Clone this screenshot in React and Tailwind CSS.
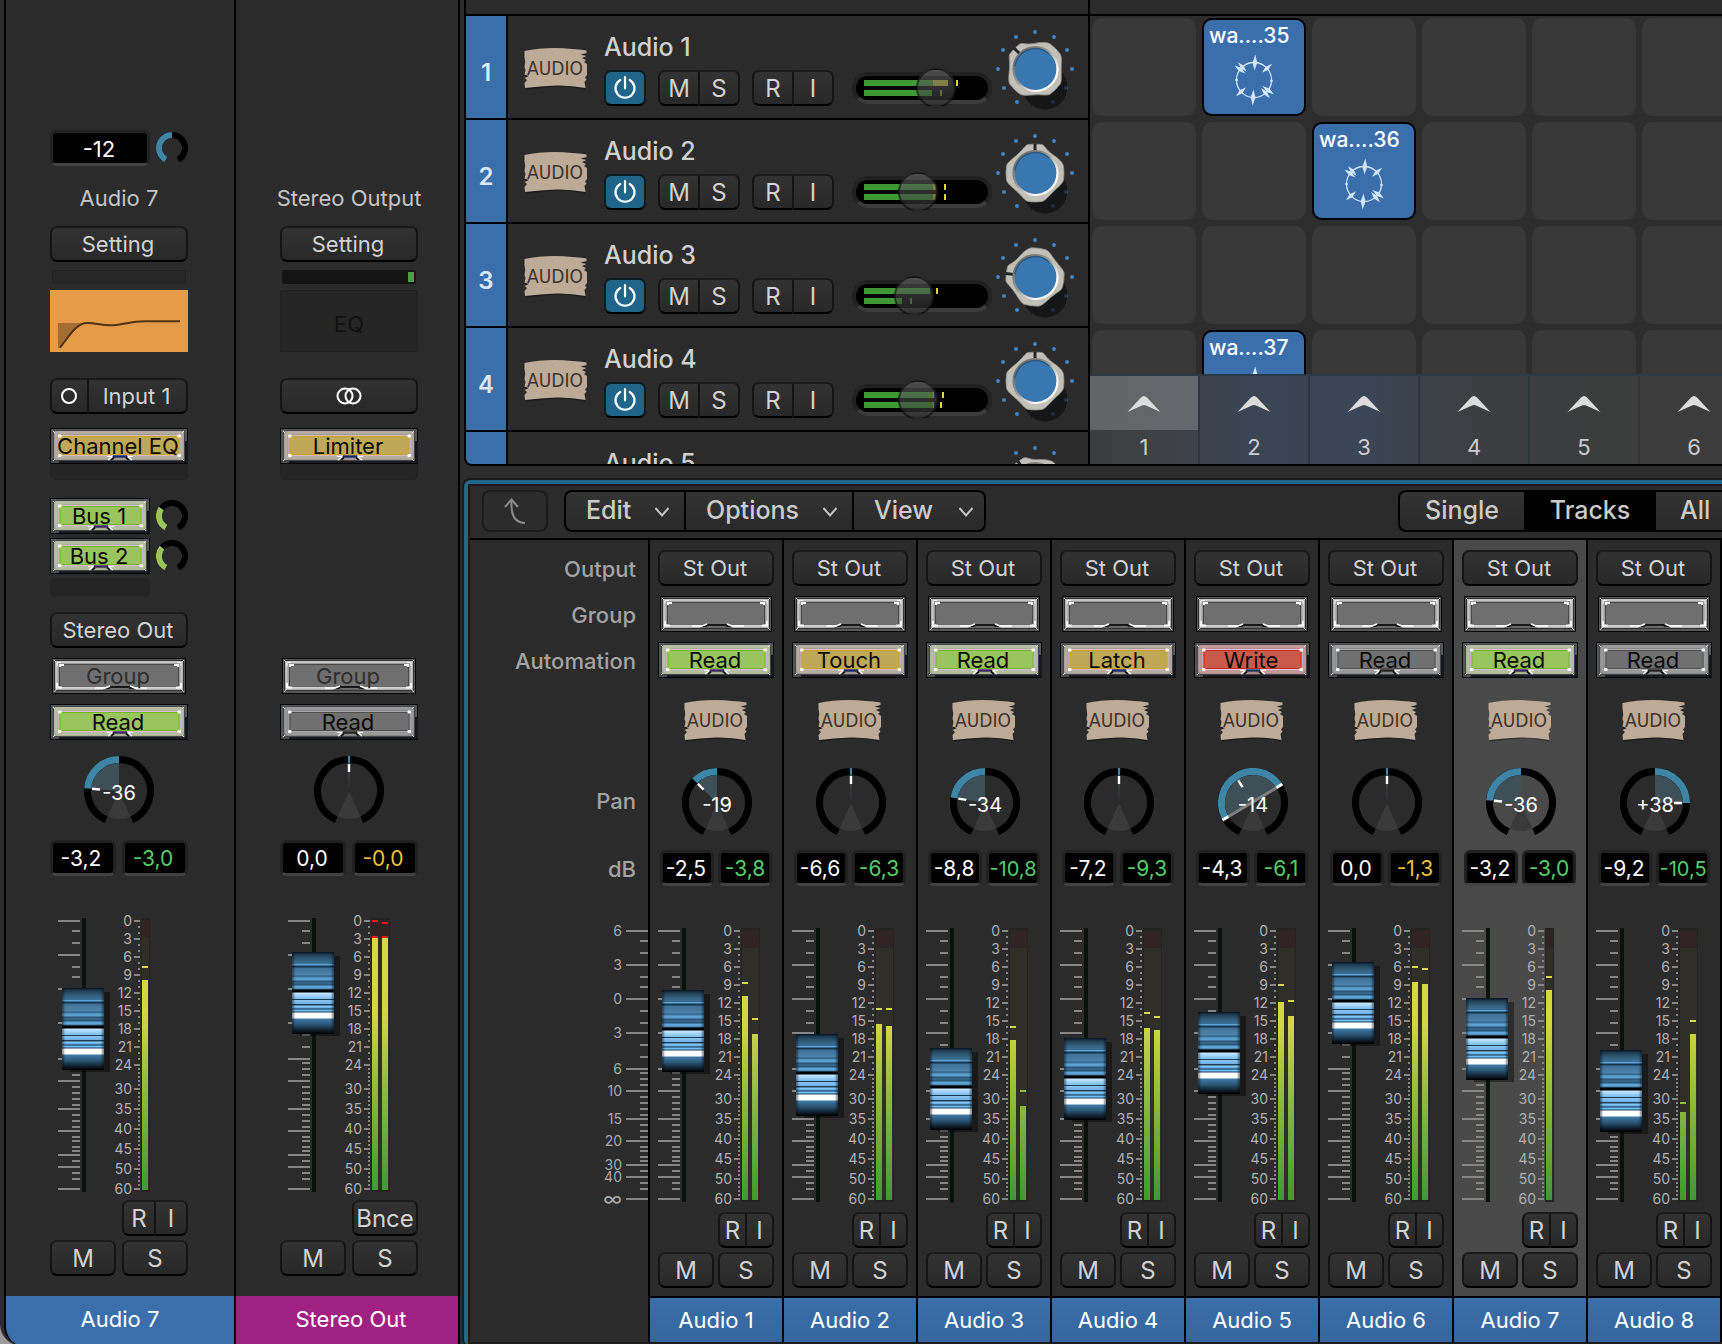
import React from "react";

/* ---------- shared styles ---------- */
const BTN =
  "box-border flex h-9 items-center justify-center overflow-visible whitespace-nowrap rounded-[7px] border-2 border-t-[#1a1a1a] border-x-[#131313] border-b-black bg-linear-to-b from-[#323232] to-[#282828] text-[#d2d2d2]";
const LABEL = "pr-[2px] text-[22px]";
const LETTER = "pt-[2px] text-[24px]";

const CAP =
  "[&::-webkit-slider-thumb]:appearance-none [&::-webkit-slider-thumb]:h-[82px] [&::-webkit-slider-thumb]:w-[42px] [&::-webkit-slider-thumb]:rounded-[1px] [&::-webkit-slider-thumb]:border-0 [&::-webkit-slider-thumb]:shadow-[7px_3px_0_-1px_rgba(0,0,0,0.4),inset_2px_0_2px_rgba(0,10,20,0.45),inset_-2px_0_2px_rgba(0,10,20,0.45)] [&::-webkit-slider-thumb]:bg-[linear-gradient(180deg,#0c1a26_0px,#1f4058_3px,#35607f_8px,#3d7098_12px,#5da4da_12px,#5da4da_13px,#16344a_14px,#16344a_15px,#3f6f94_16px,#4d84ad_23px,#2d5a7c_24px,#5da0d0_26px,#5da0d0_28px,#27506e_29px,#3a6b90_31px,#27506e_33px,#5fa5d8_34px,#5fa5d8_36px,#3a6d93_37px,#000_38px,#000_40px,#c8e8ff_41px,#9dd2fa_44px,#79b9ea_47px,#1d3c54_47px,#1d3c54_48px,#8cc4f2_48px,#6fb0e6_52px,#1d3c54_52px,#1d3c54_53px,#8fd0ff_54px,#5da8e0_56px,#163048_57px,#6fc0f5_58px,#6fc0f5_59px,#1d3c54_60px,#fff_61px,#fff_66px,#3e78a3_67px,#2d5a7c_72px,#12222f_78px,#000_82px)]";

const KNOB_THUMB =
  "[&::-webkit-slider-thumb]:appearance-none [&::-webkit-slider-thumb]:size-10 [&::-webkit-slider-thumb]:rounded-full [&::-webkit-slider-thumb]:border-2 [&::-webkit-slider-thumb]:border-black/50 [&::-webkit-slider-thumb]:bg-linear-to-b [&::-webkit-slider-thumb]:from-[#6a6a6a]/60 [&::-webkit-slider-thumb]:to-[#2e2e2e]/60";

/* ---------- backlit display button ---------- */
const TONES = {
  green: { bezel: "#a9b191", edge: "#6fbb1c", fill: "#9ac45e", rim: "#e2b4e6", under: "#3a2360" },
  yellow: { bezel: "#a59c8f", edge: "#c9a71c", fill: "#bfa958", rim: "#d9b7c9", under: "#16296b" },
  red: { bezel: "#b58686", edge: "#c92a16", fill: "#c95a4b", rim: "#d9c6f2", under: "#123c62" },
  gray: { bezel: "#868686", edge: "#4e4e4e", fill: "#707070", rim: "#a9a9a9", under: "#222222" },
};

function DisplayFace({ w, tone, wide }) {
  const c = TONES[tone];
  const m = w / 2;
  if (wide) {
    return (
      <svg className="absolute inset-0" width={w} height="36" viewBox={`0 0 ${w} 36`} aria-hidden="true">
        <rect width={w} height="36" rx="1" fill="#060606" />
        <rect x="1" y="1" width={w - 2} height="34" fill="#585858" />
        <rect x="2.5" y="2.5" width={w - 5} height="30" rx="1" fill="#9a9a9a" stroke="#333" />
        <rect x="4.5" y="4" width={w - 9} height="26.5" rx="1" fill="none" stroke="#c6c6c6" strokeWidth="2" />
        <rect x="7.5" y="6.5" width={w - 15} height="22" rx="1.500" fill="#6f6f6f" stroke="#474747" />
        <path d={`M8 9V7H12M${w - 8} 9V7H${w - 12}M5 25V29.500H10M${w - 5} 25V29.500H${w - 10}`} fill="none" stroke="#fff" strokeWidth="1.800" />
        <path d={`M5 8V4.500H9M${w - 5} 8V4.500H${w - 9}`} fill="none" stroke="#f2f2f2" strokeWidth="1" />
        <path d={`M2 2l2 2M${w - 2} 2l-2 2M2 34l3-3M${w - 2} 34l-3-3`} stroke="#e8e8e8" strokeWidth="0.8" />
        <path d={`M10 29.500H${w - 10}`} stroke="#d2d2d2" strokeWidth="1.500" />
        <path d={`M${m - 16} 31.500L${m - 9} 28H${m + 11}L${m + 17} 31.500Z`} fill="#171717" />
        <path d={`M${m - 11} 31.500H${m + 12}L${m + 9} 30H${m - 8}Z`} fill="#6f6f6f" />
        <path d={`M${m - 24} 30H${m - 14}L${m - 9} 28M${m + 28} 30H${m + 16}L${m + 11} 28`} fill="none" stroke="#fff" strokeWidth="1.500" />
      </svg>
    );
  }
  return (
    <svg className="absolute inset-0" width={w} height="36" viewBox={`0 0 ${w} 36`} aria-hidden="true">
      <rect width={w} height="36" rx="1" fill="#060606" />
      <rect x="1" y="1" width={w - 2} height="32" fill="#55565a" />
      <rect x="1" y="32" width="8" height="3" fill="#4c4c4c" />
      <rect x={w - 3} y="13" width="3" height="22" fill="#15161a" />
      <rect x="9" y="33" width={w - 12} height="2" fill="#1a1a22" />
      <rect x="3.5" y="2.5" width={w - 7} height="30" rx="2" fill={c.bezel} stroke="#44454a" />
      <rect x="6" y="4.5" width={w - 12} height="25" rx="3" fill="none" stroke="#fff" strokeOpacity="0.16" strokeWidth="3" />
      <rect x="9" y="7.5" width={w - 17} height="20" rx="1" fill={c.fill} stroke={c.rim} />
      <rect x="10" y="8.5" width={w - 19} height="18" rx="1" fill="none" stroke={c.edge} />
      <g fill="#fff">
        <rect x="8" y="6.5" width="3.5" height="3" rx="1" />
        <rect x={w - 10.5} y="6.5" width="3.5" height="3" rx="1" />
        <rect x="8" y="26" width="3.5" height="3" rx="1" />
        <rect x={w - 10.5} y="26" width="3.5" height="3" rx="1" />
      </g>
      <path d={`M3 3l2 2M${w - 4} 3l-2 2M3 33l2-2M${w - 4} 33l-2-2`} stroke="#f4f4f4" strokeWidth="1" />
      <path d={`M${m - 5} 28H${m + 7}L${m + 11} 32H${m - 9}Z`} fill={c.bezel} />
      <path d={`M${m - 6} 28.500H${m + 8}`} stroke={c.under} strokeWidth="2.400" />
      <path d={`M${m - 5} 29.500L${m - 8} 32M${m + 7} 29.500L${m + 10} 32`} stroke="#111" strokeWidth="1.800" />
      <path d={`M${m - 12} 28.500H${m - 7}M${m - 7} 29L${m - 11} 32M${m + 14} 28.500H${m + 9}M${m + 9} 29L${m + 13} 32`} fill="none" stroke="#fff" strokeWidth="1.200" />
    </svg>
  );
}

function Display({ w, width, tone = "gray", wide = false, dim = false, label, children }) {
  return (
    <button type="button" aria-label={label} className={`relative block h-9 ${width}`}>
      <DisplayFace w={w} tone={tone} wide={wide} />
      <span className={`relative block pr-[2px] text-center text-[22px] leading-9 whitespace-nowrap ${dim ? "text-[#2e2e2e]" : "text-[#0c0c0c]"}`}>
        {children}
      </span>
    </button>
  );
}

/* ---------- readouts ---------- */
function Readout({ children, className = "", label }) {
  return (
    <output
      aria-label={label}
      className={`flex h-9 items-center justify-center whitespace-nowrap rounded-[6px] border-3 border-[#212121] border-b-[#424242] bg-black pt-[2px] ${className}`}
    >
      {children}
    </output>
  );
}

/* ---------- pan and send knobs ---------- */
const pt = (cx, cy, r, a) => {
  const t = (a * Math.PI) / 180;
  return `${(cx + r * Math.sin(t)).toFixed(2)} ${(cy - r * Math.cos(t)).toFixed(2)}`;
};
const arc = (c, r, a, b) => `M${pt(c, c, r, a)}A${r} ${r} 0 ${b - a > 180 ? 1 : 0} 1 ${pt(c, c, r, b)}`;
const pie = (c, r, a, b) => `M${c} ${c}L${pt(c, c, r, a)}A${r} ${r} 0 ${b - a > 180 ? 1 : 0} 1 ${pt(c, c, r, b)}Z`;

function PanKnob({ value, spread }) {
  const a = value * 2.37;
  const from = spread ? spread[0] : value === 0 ? -2 : Math.min(0, a);
  const to = spread ? spread[1] : value === 0 ? 2 : Math.max(0, a);
  return (
    <div className="relative size-[70px]" role="slider" tabIndex={0} aria-label="Pan" aria-valuemin={-64} aria-valuemax={63} aria-valuenow={value}>
      <svg width="70" height="70" viewBox="0 0 70 70" aria-hidden="true">
        <path d={pie(35, 28, 156, 204)} fill="#3a3a3a" />
        <path d={pie(35, 28, from, to)} fill="#3e4f58" />
        <path d={arc(35, 31.5, -156, 156)} fill="none" stroke="#000" strokeWidth="7" />
        <path d={arc(35, 31.5, from, to)} fill="none" stroke="#3f85a6" strokeWidth="7" />
        {spread && (
          <>
            <path d={`M${pt(35, 35, 28, spread[0])}L${pt(35, 35, 28, spread[1])}`} stroke="#808080" strokeWidth="3" />
            <path d={`M${pt(35, 35, 28, spread[0])}L${pt(35, 35, 35, spread[0])}M${pt(35, 35, 28, spread[1])}L${pt(35, 35, 35, spread[1])}`} stroke="#fff" strokeWidth="3" />
          </>
        )}
        <path d={`M${pt(35, 35, 19, a)}L${pt(35, 35, 27, a)}`} stroke="#fff" strokeWidth="2.4" />
      </svg>
      {value !== 0 && (
        <span className="absolute inset-0 text-center text-[20px] leading-[74px] text-white">
          {value > 0 ? `+${value}` : value}
        </span>
      )}
    </div>
  );
}

function SmallKnob({ to, color, label }) {
  return (
    <svg width="32" height="32" viewBox="0 0 32 32" role="img" aria-label={label}>
      <path d={arc(16, 13, -152, 152)} fill="none" stroke="#000" strokeWidth="6" />
      <path d={arc(16, 13, -152, to)} fill="none" stroke={color} strokeWidth="6" />
    </svg>
  );
}

/* ---------- fader, scales and level meter ---------- */
const LONG = [0, 34, 68, 102, 138, 160, 188, 210, 234, 246, 268];
const SHORT = [10, 22, 46, 56, 80, 92, 114, 126, 142, 148, 154, 166, 172, 178, 184, 194, 200, 206, 216, 220, 226, 230, 240, 252, 258];
const LONG_NAMES = ["6", "3", "0", "3", "6", "10", "15", "20", "30", "40", "∞"];
const METER = [
  [0, "0"], [18, "3"], [36, "6"], [54, "9"], [72, "12"], [90, "15"], [108, "18"], [126, "21"],
  [144, "24"], [168, "30"], [188, "35"], [208, "40"], [228, "45"], [248, "50"], [268, "60"],
];
const DOTS = [];
for (let y = 6; y < 144; y += 6) DOTS.push(y);
for (let y = 148; y < 268; y += 4) DOTS.push(y);

function Fader({ id, top, bars, peaks, inset = 0, red = false, name }) {
  const meterW = bars.length === 1 ? 9 : 19;
  return (
    <div className="relative h-[290px]">
      <svg width="116" height="290" viewBox="0 0 116 290" className={inset ? "ml-2" : ""} aria-hidden="true">
        <defs>
          <linearGradient id={id} gradientUnits="userSpaceOnUse" x1="0" y1="8" x2="0" y2="280">
            <stop offset="0" stopColor="#d9d745" />
            <stop offset="0.34" stopColor="#d6d645" />
            <stop offset="0.6" stopColor="#94bd3e" />
            <stop offset="1" stopColor="#3f9a35" />
          </linearGradient>
        </defs>
        <g fill="#868686">
          {LONG.map((y) => <rect key={y} x="0" y={y + 10} width="22" height="2" />)}
          {SHORT.map((y) => <rect key={y} x="14" y={y + 10} width="8" height="2" />)}
          {METER.map(([y]) => <rect key={y} x="76" y={y + 10} width="6" height="2" />)}
          {DOTS.map((y) => <rect key={y} x="80" y={y + 10} width="2" height="2" />)}
        </g>
        <rect x="24" y="8" width="4" height="274" fill="#07120a" />
        <g fill="#b0b0b0" fontSize="14" textAnchor="end">
          {METER.map(([y, t]) => <text key={t} x="74" y={y + 16}>{t}</text>)}
        </g>
        <rect x="83" y="8" width={meterW} height="274" fill="#232320" />
        <rect x="84" y="10" width={meterW - 2} height="18" fill="#322424" />
        <rect x="84" y="28" width={meterW - 2} height="252" fill="#2f2f27" />
        {bars.map((b, i) => (
          <g key={i}>
            <rect x={84 + i * 10} y={b + 8} width="6" height={272 - b} fill={`url(#${id})`} />
            <rect x={84 + i * 10} y={peaks[i] + 8} width="6" height="2" fill={red ? "#f2141c" : peaks[i] > 160 ? "#8fc03c" : "#d9d745"} />
            {red && <rect x={84 + i * 10} y={b + 6} width="6" height="2" fill="#f2141c" />}
          </g>
        ))}
      </svg>
      <input
        type="range"
        min="0"
        max="274"
        defaultValue={233 - top}
        aria-label={`${name} volume`}
        className={`absolute -top-[33px] m-0 h-[356px] w-[42px] appearance-none bg-transparent [writing-mode:vertical-lr] [direction:rtl] ${inset ? "left-3" : "left-1"} ${CAP}`}
      />
    </div>
  );
}

/* ---------- "AUDIO" paper label ---------- */
function Paper() {
  return (
    <svg width="64" height="42" viewBox="0 0 64 42" className="block" role="img" aria-label="Audio track icon">
      <path d="M1 5Q15 3 30 3Q48 3 62 6L55 9L62 10L58 13L61 16Q63 24 60 29L62 31L60 35L61 42Q45 37 30 39Q15 40 2 42L1 35L5 33L1 31Q3 18 1 5Z" fill="#000" opacity="0.3" />
      <path d="M0.500 3Q14 0 31 0Q49 0.500 62.500 2.500L62.500 5L56.500 6.500L62.500 8L58 10L62 12L60 14L63 16V27L61 29.500L62.500 31.500L60.500 34L61.500 40Q46 37 32 37.500Q16 38 1 40L0.500 35L3 32L0.500 30L5 28L0.500 26.500L1.500 22L0.500 19Q2 14 0.500 9Z" fill="#bdab98" />
      <text x="31" y="27" textAnchor="middle" fontSize="19" fill="#3d352d" fontFamily="'DejaVu Sans Condensed','DejaVu Sans',sans-serif">
        AUDIO
      </text>
    </svg>
  );
}

/* ---------- inspector strips ---------- */
function MuteSolo({ className }) {
  return (
    <div className={`flex ${className}`}>
      <button type="button" aria-label="Mute" className={`${BTN} ${LETTER} flex-1`}>M</button>
      <button type="button" aria-label="Solo" className={`${BTN} ${LETTER} flex-1`}>S</button>
    </div>
  );
}

function RecordInput({ className }) {
  return (
    <div className={`flex ${className}`}>
      <button type="button" aria-label="Record enable" className={`${BTN} ${LETTER} flex-1 rounded-r-none border-r`}>R</button>
      <button type="button" aria-label="Input monitoring" className={`${BTN} ${LETTER} flex-1 rounded-l-none border-l`}>I</button>
    </div>
  );
}

function InspectorAudio() {
  return (
    <section className="flex w-[230px] flex-none flex-col border-r-2 border-black pt-[130px]" aria-label="Audio 7 channel strip">
      <div className="ml-11 w-[138px]">
        <div className="flex h-9 items-center justify-between">
          <Readout label="Gain" className="w-[100px] pr-[2px] text-[22px] text-white">-12</Readout>
          <SmallKnob to={0} color="#3f85a6" label="Gain knob" />
        </div>
        <h2 className="mt-[18px] h-7 text-center text-[22px] leading-7 text-[#c4c4c4]">Audio 7</h2>
        <button type="button" className={`${BTN} ${LABEL} mt-[14px] w-full`}>Setting</button>
        <div className="mx-[2px] mt-2 h-[14px] rounded-[2px] border border-[#222] bg-[#272727]" />
        <svg className="mt-[6px] block" width="138" height="62" viewBox="0 0 138 62" role="img" aria-label="Equalizer curve">
          <rect width="138" height="62" fill="#e69b48" />
          <path d="M8 33H33C25 38 18 49 11 58H8Z" fill="#a46d35" />
          <path d="M10 57.500C18 48 26 33 37 33C47 33 54 36 63 35.200C74 34.500 80 31.200 96 31.200H130" fill="none" stroke="#513515" strokeWidth="2" />
        </svg>
        <div className="mt-[26px] flex">
          <button type="button" aria-label="Mono format" className={`${BTN} w-[38px] rounded-r-none border-r pr-[2px]`}>
            <svg width="20" height="20" viewBox="0 0 20 20" aria-hidden="true"><circle cx="10" cy="10" r="7" fill="none" stroke="#fff" strokeWidth="2" /></svg>
          </button>
          <button type="button" className={`${BTN} ${LABEL} flex-1 rounded-l-none border-l`}>Input 1</button>
        </div>
        <div className="mt-[14px] h-[52px] rounded-b-[5px] border border-[#222] bg-[#252525]">
          <div className="-m-px"><Display w={138} width="w-[138px]" tone="yellow">Channel EQ</Display></div>
        </div>
        <div className="mt-[18px] flex items-center justify-between">
          <Display w={100} width="w-[100px]" tone="green">Bus 1</Display>
          <SmallKnob to={-55} color="#9ac45e" label="Bus 1 send level" />
        </div>
        <div className="mt-1 flex items-center justify-between">
          <Display w={100} width="w-[100px]" tone="green">Bus 2</Display>
          <SmallKnob to={-50} color="#9ac45e" label="Bus 2 send level" />
        </div>
        <div className="mt-1 h-[18px] w-[100px] rounded-[5px] border border-[#222] bg-[#252525]" />
        <button type="button" className={`${BTN} ${LABEL} mt-4 w-full`}>Stereo Out</button>
        <div className="mt-[10px] flex justify-center"><Display w={134} width="w-[134px]" wide dim>Group</Display></div>
        <div className="mt-[10px]"><Display w={138} width="w-[138px]" tone="green">Read</Display></div>
        <div className="mt-4 flex justify-center"><PanKnob value={-36} /></div>
        <div className="mt-[14px] flex justify-between">
          <Readout label="Volume" className="w-[66px] pr-1 text-[21px] text-white">-3,2</Readout>
          <Readout label="Peak level" className="w-[66px] pr-1 text-[21px] text-[#54cf68]">-3,0</Readout>
        </div>
        <div className="mt-[34px]"><Fader id="meter-l1" inset={8} top={70} bars={[62]} peaks={[48]} name="Audio 7" /></div>
        <div className="flex justify-end"><RecordInput className="w-[66px]" /></div>
        <MuteSolo className="mt-1 gap-[6px]" />
      </div>
      <div className="mt-5 flex-1 bg-[#3a6fac] text-center text-[22px] leading-[46px] text-white">Audio 7</div>
    </section>
  );
}

function InspectorOutput() {
  return (
    <section className="flex w-[224px] flex-none flex-col border-r-2 border-black pt-[184px]" aria-label="Stereo Out channel strip">
      <div className="ml-11 w-[138px]">
        <h2 className="flex h-7 justify-center text-[22px] leading-7 whitespace-nowrap text-[#c4c4c4]">Stereo Output</h2>
        <button type="button" className={`${BTN} ${LABEL} mt-[14px] w-full`}>Setting</button>
        <div className="mx-[2px] mt-2 flex h-[14px] justify-end rounded-[2px] bg-[#141414] p-[2px]">
          <div className="w-[6px] bg-[#46a047]" />
        </div>
        <div className="mt-[6px] h-[62px] rounded-[2px] border border-[#212121] bg-[#252525] text-center text-[22px] leading-[66px] text-[#111]">EQ</div>
        <button type="button" aria-label="Stereo format" className={`${BTN} mt-[26px] w-full`}>
          <svg width="28" height="20" viewBox="0 0 28 20" aria-hidden="true">
            <g fill="none" stroke="#fff" strokeWidth="2"><circle cx="10" cy="10" r="7.500" /><circle cx="18" cy="10" r="7.500" /></g>
          </svg>
        </button>
        <div className="mt-[14px] h-[52px] rounded-b-[5px] border border-[#222] bg-[#252525]">
          <div className="-m-px"><Display w={138} width="w-[138px]" tone="yellow">Limiter</Display></div>
        </div>
        <div className="mt-[178px] flex justify-center"><Display w={134} width="w-[134px]" wide dim>Group</Display></div>
        <div className="mt-[10px]"><Display w={138} width="w-[138px]">Read</Display></div>
        <div className="mt-4 flex justify-center"><PanKnob value={0} /></div>
        <div className="mt-[14px] flex justify-between">
          <Readout label="Volume" className="w-[66px] pr-[2px] text-[21px] text-white">0,0</Readout>
          <Readout label="Peak level" className="w-[66px] pr-1 text-[21px] text-[#efbf3a]">-0,0</Readout>
        </div>
        <div className="mt-[34px]"><Fader id="meter-l2" inset={8} top={34} bars={[20, 20]} peaks={[2, 4]} red name="Stereo Out" /></div>
        <div className="flex justify-end"><button type="button" className={`${BTN} ${LETTER} w-[66px]`}>Bnce</button></div>
        <MuteSolo className="mt-1 gap-[6px]" />
      </div>
      <div className="mt-5 flex-1 bg-[#a12183] pl-2 text-center text-[22px] leading-[46px] text-white">Stereo Out</div>
    </section>
  );
}

/* ---------- track list ---------- */
const TRACKS = [
  { n: 1, knob: 64, pan: -45, bars: [84, 68], over: 69, marks: [[92, 0], [76, 1]], tint: ["#dcd840", "#a89d3c"] },
  { n: 2, knob: 46, pan: 0, bars: [72, 72], over: 69, marks: [[80, 0], [80, 1]], tint: ["#dcd840", "#dcd840"] },
  { n: 3, knob: 42, pan: -83, bars: [66, 38], over: 69, marks: [[72, 0], [46, 1]], tint: ["#dcd840", "#4f9a42"] },
  { n: 4, knob: 46, pan: 0, bars: [70, 70], over: 69, marks: [[78, 0], [76, 1]], tint: ["#dcd840", "#dcd840"] },
];

function Rotary({ turn }) {
  const id = `disc${-turn}`;
  const dots = [[0, -37], [-19, -32], [19, -32], [-32, -19], [32, -19], [-37, 0], [37, 0], [-31, 19], [31, 19], [-18, 33], [18, 33]];
  return (
    <svg width="84" height="88" viewBox="-41 -41 84 88" role="img" aria-label="Pan knob">
      <defs>
        <linearGradient id={id} x1="0" y1="0" x2="1" y2="1">
          <stop offset="0" stopColor="#5c5c58" />
          <stop offset="0.45" stopColor="#9a9a94" />
          <stop offset="0.75" stopColor="#fff" />
          <stop offset="1" stopColor="#f4f4f0" />
        </linearGradient>
      </defs>
      {dots.map(([x, y]) => <circle key={`${x},${y}`} cx={x} cy={y} r="2" fill="#3c85c6" />)}
      <circle cx="10" cy="18" r="22.500" fill="#0e0e0e" opacity="0.72" />
      <g transform={`rotate(${turn})`}>
        <path
          d="M-7 -28.500Q0 -29.500 7 -28.500C10 -27.500 11 -23 17 -19S27.500 -11 28.500 -7Q29.500 0 28.500 7C27.500 11 23 14 18.500 18.500S10 28 7 28.500Q0 29.500 -7 28.500C-10 28 -13 23 -18 18.500S-27.500 11 -28.500 7Q-29.500 0 -28.500 -7C-27.500 -11 -22 -14.500 -17 -19S-10 -27.500 -7 -28.500Z"
          fill="#c1c1b9" stroke="#8f8f88" strokeWidth="0.800"
        />
        <rect x="-1.500" y="-29.500" width="3" height="10" fill="#222" />
      </g>
      <circle r="22" cx="0.500" fill="#3877b0" stroke={`url(#${id})`} strokeWidth="2.200" />
      <path d="M-20 -3A20.500 20.500 0 0 1 14 -15" fill="none" stroke="#1d3f63" strokeWidth="1.500" opacity="0.6" />
    </svg>
  );
}

const TRACK_NAME = "h-8 text-[25px] leading-8 font-medium text-[#d0d0d0]";

function TrackRow({ t }) {
  return (
    <div className="flex h-[104px] flex-none border-b-2 border-black">
      <div className="flex w-[42px] flex-none items-center justify-center border-r-2 border-black bg-[#3a6fac] pt-3 text-[24px] font-semibold text-[#dce7f3]">
        {t.n}
      </div>
      <div className="mt-8 ml-4 w-16"><Paper /></div>
      <div className="ml-4 w-[230px] pt-[15px]">
        <h3 className={TRACK_NAME}>Audio {t.n}</h3>
        <div className="mt-[7px] flex gap-3">
          <button type="button" aria-label={`Audio ${t.n} power`} className="flex h-9 w-[42px] items-center justify-center rounded-[7px] border-2 border-[#0b1a22] border-b-black bg-[#1f6589]">
            <svg width="26" height="26" viewBox="0 0 26 26" fill="none" stroke="#fff" strokeWidth="2.200" strokeLinecap="round" aria-hidden="true">
              <path d="M13 2V13.500M8.300 5A9.500 9.500 0 1 0 17.700 5" />
            </svg>
          </button>
          <div className="flex w-[82px]">
            <button type="button" aria-label="Mute" className={`${BTN} ${LETTER} flex-1 rounded-r-none border-r`}>M</button>
            <button type="button" aria-label="Solo" className={`${BTN} ${LETTER} flex-1 rounded-l-none border-l`}>S</button>
          </div>
          <RecordInput className="w-[82px]" />
        </div>
      </div>
      <div className="relative mt-14 ml-[18px] h-8 w-[140px] flex-none rounded-full border-4 border-[#212121] border-b-[#3c3c3c] bg-black">
        <svg width="132" height="24" viewBox="0 0 132 24" className="block" aria-hidden="true">
          {t.bars.map((b, i) => (
            <g key={i}>
              <rect x="8" y={4 + i * 10} width={Math.min(b, t.over)} height="6" fill="#3f9a35" />
              {b > t.over && <rect x={8 + t.over} y={4 + i * 10} width={b - t.over} height="6" fill="#c5bb3e" />}
            </g>
          ))}
          {t.marks.map(([x, i]) => <rect key={i} x={x + 8} y={4 + i * 10} width="2" height="6" fill={t.tint[i]} />)}
        </svg>
        <input type="range" min="0" max="100" defaultValue={t.knob} aria-label={`Audio ${t.n} level`} className={`absolute -top-2 -left-1 m-0 h-10 w-[140px] appearance-none bg-transparent ${KNOB_THUMB}`} />
      </div>
      <div className="mt-3 ml-[2px]"><Rotary turn={t.pan} /></div>
    </div>
  );
}

function TrackRowPeek({ name }) {
  return (
    <div className="flex h-8 flex-none overflow-hidden">
      <div className="w-[42px] flex-none border-r-2 border-black bg-[#3a6fac]" />
      <h3 className={`ml-24 w-[230px] pt-[15px] ${TRACK_NAME}`}>{name}</h3>
      <div className="mt-3 ml-[160px]"><Rotary turn={-36} /></div>
    </div>
  );
}

/* ---------- loop grid ---------- */
function RingWave() {
  const spikes = [[3, 1], [48, 0.85], [126, 0.9], [139, 0.85], [183, 1], [228, 0.85], [307, 0.85], [318, 0.8]];
  return (
    <svg width="52" height="52" viewBox="-26 -26 52 52" aria-hidden="true" className="mx-auto block">
      <circle r="17.500" fill="none" stroke="#d3e5fa" strokeWidth="1.300" />
      {spikes.map(([a, s]) => (
        <path key={a} transform={`rotate(${a})`} d={`M0 ${-17.5 - 8 * s}L${2.4 * s} -17.500L0 ${-17.5 + 8 * s}L${-2.4 * s} -17.500Z`} fill="#d3e5fa" />
      ))}
      <circle cx="-17.500" r="1.300" fill="#d3e5fa" />
      <circle cx="17.500" cy="1" r="1.300" fill="#d3e5fa" />
    </svg>
  );
}

const CLIPS = { "0-1": "wa....35", "1-2": "wa....36", "3-1": "wa....37" };
const COLS = [0, 1, 2, 3, 4, 5];

function LoopGrid() {
  return (
    <div className="flex min-w-0 flex-1 flex-col overflow-hidden bg-[#2d2d2d]">
      <div className="h-[358px] overflow-hidden">
        {[0, 1, 2, 3].map((r) => (
          <div key={r} className="flex h-[104px] gap-[6px] px-[2px] pt-[2px]">
            {COLS.map((c) => {
              const clip = CLIPS[`${r}-${c}`];
              return clip ? (
                <button key={c} type="button" className="flex h-[98px] w-[104px] flex-none flex-col justify-start overflow-hidden rounded-[10px] border-2 border-black bg-[#3a6fac]">
                  <span className="mt-[2px] block w-full pl-[5px] text-left text-[21px] leading-7 font-medium text-white">{clip}</span>
                  <span className="mt-1 block w-full"><RingWave /></span>
                </button>
              ) : (
                <button key={c} type="button" aria-label={`Empty cell ${r + 1}-${c + 1}`} className="h-[98px] w-[104px] flex-none rounded-[10px] bg-[#383838]" />
              );
            })}
          </div>
        ))}
      </div>
      <div className="flex h-[90px] border-t-2 border-[#2c3947] bg-[linear-gradient(90deg,#3d3d3f_0px,#3e4247_80px,#3b4553_150px,#3a4656_280px,#3c4046_350px,#3c3d3e_420px,#3c3c3c_100%)]">
        {COLS.map((c) => (
          <button key={c} type="button" aria-label={`Scene ${c + 1}`} className="flex w-[110px] flex-none flex-col border-r-2 border-[#2b323c]/80">
            <span className={`flex h-[54px] w-full items-center justify-center pt-[2px] ${c === 0 ? "bg-white/20" : ""}`}>
              <svg width="34" height="18" viewBox="0 0 34 18" aria-hidden="true"><path d="M0.500 17L14 2.500Q17 -0.500 20 2.500L33.500 17L19 10.500Q17 9.600 15 10.500Z" fill="#dcdcdc" /></svg>
            </span>
            <span className="block w-full text-center text-[22px] leading-[34px] text-[#cdcdcd]">{c + 1}</span>
          </button>
        ))}
      </div>
    </div>
  );
}

/* ---------- mixer ---------- */
const STRIPS = [
  { auto: "Read", tone: "green", pan: -19, db: "-2,5", peak: "-3,8", top: 62, bars: [68, 106], peaks: [54, 90] },
  { auto: "Touch", tone: "yellow", pan: 0, db: "-6,6", peak: "-6,3", top: 106, bars: [96, 98], peaks: [80, 80] },
  { auto: "Read", tone: "green", pan: -34, db: "-8,8", peak: "-10,8", top: 120, bars: [112, 178], peaks: [98, 162] },
  { auto: "Latch", tone: "yellow", pan: 0, db: "-7,2", peak: "-9,3", top: 110, bars: [100, 102], peaks: [84, 88] },
  { auto: "Write", tone: "red", pan: -14, spread: [-119, 57], db: "-4,3", peak: "-6,1", top: 84, bars: [74, 88], peaks: [56, 72] },
  { auto: "Read", tone: "gray", pan: 0, db: "0,0", peak: "-1,3", warm: true, top: 34, bars: [54, 56], peaks: [38, 40] },
  { auto: "Read", tone: "green", pan: -36, db: "-3,2", peak: "-3,0", top: 70, bars: [62], peaks: [48], selected: true },
  { auto: "Read", tone: "gray", pan: 38, db: "-9,2", peak: "-10,5", top: 122, bars: [184, 106], peaks: [174, 92] },
];

function MixerStrip({ s, n }) {
  return (
    <section aria-label={`Audio ${n}`} className={`flex min-w-[134px] flex-1 flex-col border-r-2 border-black ${s.selected ? "bg-[#494949]" : ""}`}>
      <div className="mx-auto w-[116px] pt-[10px]">
        <button type="button" className={`${BTN} ${LABEL} w-full`}>St Out</button>
        <div className="mt-[10px] flex justify-center"><Display w={112} width="w-[112px]" wide label="Group" /></div>
        <div className="mt-[10px]"><Display w={116} width="w-[116px]" tone={s.tone}>{s.auto}</Display></div>
        <div className="mt-[22px] flex justify-center"><Paper /></div>
        <div className="mt-[26px] flex justify-center pl-[2px]"><PanKnob value={s.pan} spread={s.spread} /></div>
        <div className="mx-[2px] mt-3 flex justify-between">
          <Readout label="Volume" className="w-[54px] pr-[2px] text-[21px] text-white">{s.db}</Readout>
          <Readout label="Peak level" className={`w-[54px] ${s.peak.length > 4 ? "text-[20px]" : "text-[21px]"} ${s.warm ? "text-[#efbf3a]" : "text-[#54cf68]"}`}>{s.peak}</Readout>
        </div>
        <div className="mt-[34px]"><Fader id={`meter-${n}`} top={s.top} bars={s.bars} peaks={s.peaks} name={`Audio ${n}`} /></div>
        <div className="mt-[2px] flex justify-end"><RecordInput className="w-14" /></div>
        <MuteSolo className="mt-1 gap-1" />
      </div>
      <div className="mt-2 flex-1 border-t-2 border-black bg-linear-to-b from-[#3a6fac] to-[#35669c] text-center text-[22px] leading-[44px] text-white">Audio {n}</div>
    </section>
  );
}

function Chevron() {
  return (
    <svg width="16" height="12" viewBox="0 0 16 12" fill="none" stroke="#c4c4c4" strokeWidth="2" aria-hidden="true" className="mt-[2px]">
      <path d="M1.500 2L8 9.500L14.500 2" />
    </svg>
  );
}

function MixerToolbar() {
  return (
    <div className="flex h-[54px] items-start border-b-2 border-black pt-1 pl-3">
      <button type="button" aria-label="Up one level" className="flex h-[42px] w-[66px] items-center justify-center rounded-[8px] border-2 border-[#1b1b1b] bg-[#2c2c2c]">
        <svg width="26" height="28" viewBox="0 0 26 28" fill="none" stroke="#8b8b8b" strokeWidth="2" aria-hidden="true">
          <path d="M3 10L9.500 2.500L16 10M9.500 3.500C9 16 11 25.500 23 26" />
        </svg>
      </button>
      <div className="ml-4 flex h-[42px] overflow-hidden rounded-[8px] border-2 border-black bg-linear-to-b from-[#333] to-[#292929] text-[25px] font-medium text-[#cbcbcb]">
        <button type="button" className="flex w-[120px] items-center justify-between border-r-2 border-black pr-[14px] pl-5">Edit<Chevron /></button>
        <button type="button" className="flex w-[168px] items-center justify-between border-r-2 border-black pr-[14px] pl-5">Options<Chevron /></button>
        <button type="button" className="flex w-[130px] items-center justify-between pr-[10px] pl-5">View<Chevron /></button>
      </div>
      <div className="ml-auto flex h-[42px] rounded-l-[8px] border-2 border-r-0 border-black bg-linear-to-b from-[#333] to-[#292929] text-[25px] font-medium text-[#cbcbcb]">
        <button type="button" aria-pressed="false" className="w-[124px]">Single</button>
        <button type="button" aria-pressed="true" className="w-[132px] bg-black">Tracks</button>
        <button type="button" aria-pressed="false" className="w-[66px] pl-6 text-left">All</button>
      </div>
    </div>
  );
}

function Mixer() {
  return (
    <main className="mt-3 -ml-[2px] flex flex-1 flex-col rounded-l-[8px] border-2 border-r-0 border-b-0 border-[#1b1b1b]">
      <div className="flex flex-1 flex-col rounded-l-[7px] border-4 border-r-0 border-b-2 border-[#20678a]">
        <div className="flex flex-1 flex-col overflow-hidden border-2 border-r-0 border-[#1c1c1c] bg-[#2b2b2b]">
          <MixerToolbar />
          <div className="flex flex-1">
            <div className="w-[180px] flex-none border-r-2 border-black text-right text-[22px] leading-9 font-medium text-[#a3a3a3]">
              <div className="mt-[11px] h-9 pr-3">Output</div>
              <div className="mt-[10px] h-9 pr-3">Group</div>
              <div className="mt-[10px] h-9 pr-3">Automation</div>
              <div className="mt-[104px] h-9 pr-3">Pan</div>
              <div className="mt-8 h-9 pr-3">dB</div>
              <svg className="mt-[33px] ml-auto block" width="60" height="290" viewBox="0 0 60 290" aria-hidden="true">
                <g fill="#868686">
                  {LONG.map((y) => <rect key={y} x="38" y={y + 10} width="22" height="2" />)}
                  {SHORT.map((y) => <rect key={y} x="52" y={y + 10} width="8" height="2" />)}
                </g>
                <g fill="#a8a8a8" fontWeight="400" textAnchor="end">
                  {LONG_NAMES.map((t, i) => <text key={i} x="34" y={LONG[i] + (t === "∞" ? 18 : 16)} fontSize={t === "∞" ? 20 : 14}>{t}</text>)}
                </g>
              </svg>
            </div>
            {STRIPS.map((s, i) => <MixerStrip key={i} s={s} n={i + 1} />)}
          </div>
        </div>
      </div>
    </main>
  );
}

export default function App() {
  return (
    <div className="min-h-screen overflow-x-hidden bg-[#9a9a9a] font-['Inter','Liberation_Sans',sans-serif]">
      <div className="flex min-h-screen overflow-hidden rounded-bl-[22px] bg-[#2d2d2d]">
        <aside className="ml-1 flex flex-none overflow-hidden rounded-bl-[20px] border-l-2 border-black bg-[#2b2b2b]">
          <InspectorAudio />
          <InspectorOutput />
        </aside>
        <div className="ml-1 flex min-w-0 flex-1 flex-col">
          <div className="flex h-[466px] flex-none overflow-hidden rounded-bl-[8px] border-b-2 border-l-2 border-black bg-[#2b2b2b]">
            <div className="flex w-[624px] flex-none flex-col border-r-2 border-black">
              <div className="h-4 flex-none border-b-2 border-black" />
              {TRACKS.map((t) => <TrackRow key={t.n} t={t} />)}
              <TrackRowPeek name="Audio 5" />
            </div>
            <div className="flex min-w-0 flex-1 flex-col">
              <div className="h-4 flex-none border-b-2 border-black" />
              <LoopGrid />
            </div>
          </div>
          <Mixer />
        </div>
      </div>
    </div>
  );
}
